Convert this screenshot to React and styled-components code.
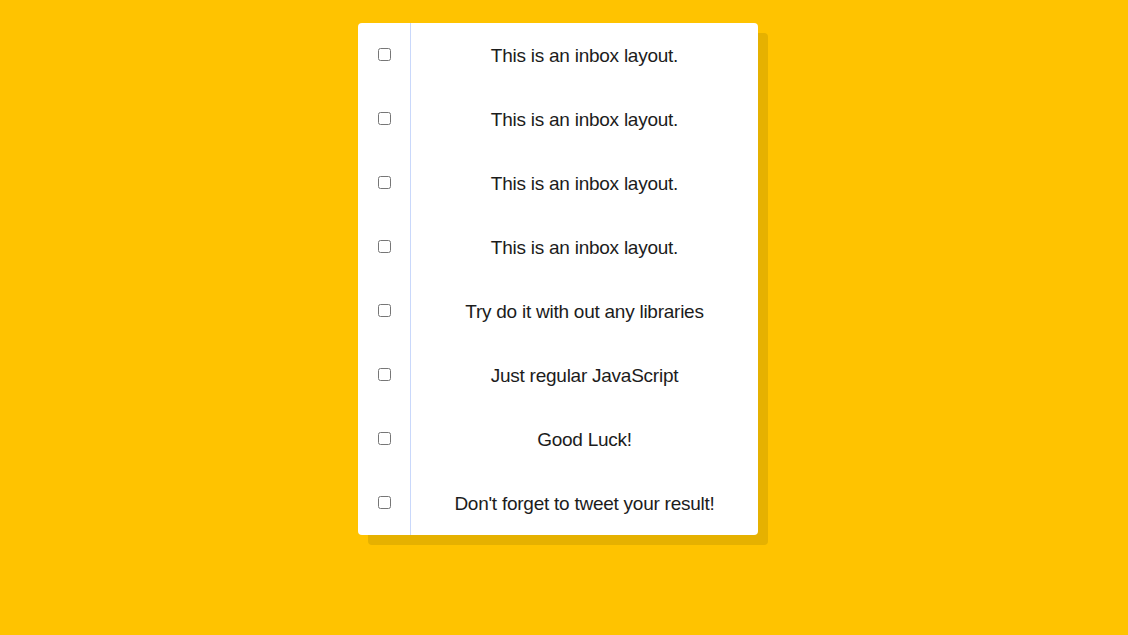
import styled, { createGlobalStyle } from "styled-components";

const GlobalStyle = createGlobalStyle`
  html, body {
    margin: 0;
    padding: 0;
    background: #ffc300;
    font-family: "Liberation Sans", Arial, sans-serif;
  }
`;

const Page = styled.div`
  min-height: 635px;
  display: flex;
  justify-content: center;
  align-items: flex-start;
  padding: 23px 12px 0 0;
  box-sizing: border-box;
`;

const Inbox = styled.div`
  width: 400px;
  background: white;
  border-radius: 4px;
  box-shadow: 10px 10px 0 #e6b100;
  overflow: hidden;
`;

const Item = styled.label`
  display: flex;
  height: 64px;
  align-items: center;
  cursor: pointer;
`;

const CheckCell = styled.div`
  width: 53px;
  height: 100%;
  flex-shrink: 0;
  display: flex;
  align-items: center;
  justify-content: center;
  border-right: 1px solid #c9d8fb;
  box-sizing: border-box;
  padding: 0 0 1px 0;

  input {
    margin: 0;
    width: 13px;
    height: 13px;
  }
`;

const Text = styled.p`
  flex: 1;
  margin: 0;
  text-align: center;
  font-size: 19px;
  font-weight: 300;
  color: #1c1c1c;
  letter-spacing: -0.25px;
  padding-top: 1px;
`;

const items = [
  "This is an inbox layout.",
  "This is an inbox layout.",
  "This is an inbox layout.",
  "This is an inbox layout.",
  "Try do it with out any libraries",
  "Just regular JavaScript",
  "Good Luck!",
  "Don't forget to tweet your result!",
];

function App() {
  return (
    <>
      <GlobalStyle />
      <Page>
        <Inbox>
          {items.map((text, i) => (
            <Item key={i}>
              <CheckCell>
                <input type="checkbox" />
              </CheckCell>
              <Text>{text}</Text>
            </Item>
          ))}
        </Inbox>
      </Page>
    </>
  );
}

export default App;
